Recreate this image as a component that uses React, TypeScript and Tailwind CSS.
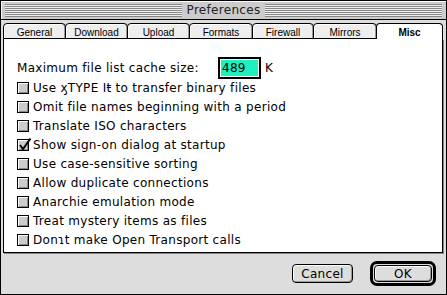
import React from "react";

function Stripes() {
  return (
    <div className="flex-1 h-[13px] flex flex-col gap-px bg-[#eeeeee]">
      {[0, 1, 2, 3, 4, 5, 6].map((i) => (
        <div key={i} className="h-px bg-[#888888]" />
      ))}
    </div>
  );
}

const tabs = [
  { label: "General", w: "w-[63px]" },
  { label: "Download", w: "w-[63px]" },
  { label: "Upload", w: "w-[63px]" },
  { label: "Formats", w: "w-[64px]" },
  { label: "Firewall", w: "w-[62px]" },
  { label: "Mirrors", w: "w-[64px]" },
  { label: "Misc", w: "w-[67px]", active: true },
];

const options: { label: string; checked?: boolean }[] = [
  { label: "Use ӽTYPE Iŧ to transfer binary files" },
  { label: "Omit file names beginning with a period" },
  { label: "Translate ISO characters" },
  { label: "Show sign-on dialog at startup", checked: true },
  { label: "Use case-sensitive sorting" },
  { label: "Allow duplicate connections" },
  { label: "Anarchie emulation mode" },
  { label: "Treat mystery items as files" },
  { label: "Donɿt make Open Transport calls" },
];

function Checkbox({ checked }: { checked?: boolean }) {
  return (
    <div className="relative w-[12px] h-[12px] shrink-0 border border-black bg-[#cccccc] shadow-[inset_1px_1px_0_#ffffff,inset_-1px_-1px_0_#888888]">
      {checked && (
        <svg
          className="absolute left-[0px] top-[-3px]"
          width="14"
          height="14"
          viewBox="0 0 14 14"
        >
          <path d="M2 8 L5 12 L12.5 1.5" stroke="#000" strokeWidth="2" fill="none" />
        </svg>
      )}
    </div>
  );
}

export default function App() {
  return (
    <div className="w-[447px] h-[295px] border border-black bg-[#dddddd] flex flex-col overflow-hidden text-black text-[12px] tracking-[0.3px] [font-family:'DejaVu_Sans',sans-serif]">
      {/* Title bar */}
      <div className="h-[19px] shrink-0 border-b border-black bg-[#cccccc] shadow-[inset_1px_1px_0_#ffffff] flex items-center px-[4px] gap-[5px]">
        <Stripes />
        <span className="leading-none text-[#222222]">Preferences</span>
        <Stripes />
      </div>

      {/* Body */}
      <div className="flex-1 flex flex-col pl-[2px] pr-[3px] pt-[3px]">
        {/* Tabs */}
        <div className="h-[16px] shrink-0 flex">
          {tabs.map((t, i) => (
            <div
              key={t.label}
              className={
                (t.active
                  ? "bg-white border-b-0 font-bold "
                  : "bg-[#eeeeee] border-b shadow-[inset_-1px_0_0_#999999,inset_1px_1px_0_#ffffff] ") +
                (i > 0 ? "-ml-px " : "") +
                t.w +
                " h-[16px] border-t border-x border-black rounded-t-[4px] flex justify-center pt-[4px] leading-none text-[10px] tracking-normal [font-family:'Liberation_Sans',Arial,sans-serif]"
              }
            >
              {t.label}
            </div>
          ))}
        </div>

        {/* Panel */}
        <div className="h-[214px] shrink-0 bg-white border-x border-b border-black shadow-[1px_1px_0_#888888] pt-[18px] pl-[13px] flex flex-col">
          <div className="h-[21px] flex items-center">
            <span className="w-[201px] shrink-0 leading-none">Maximum file list cache size:</span>
            <div className="w-[43px] h-[22px] self-start shrink-0 border-2 border-black bg-white p-px">
              <div className="h-full bg-[#1ef0c0] flex items-center pl-px leading-none">489</div>
            </div>
            <span className="ml-[4px] leading-none">K</span>
          </div>
          {options.map((o) => (
            <div key={o.label} className="h-[19px] flex items-center gap-[4px]">
              <Checkbox checked={o.checked} />
              <span className="leading-none whitespace-nowrap">{o.label}</span>
            </div>
          ))}
        </div>

        {/* Buttons */}
        <div className="flex-1 flex items-center justify-end gap-[17px] pr-[7px]">
          <div className="w-[61px] h-[19px] border border-black rounded-[4px] bg-[#dddddd] shadow-[inset_1px_1px_0_#ffffff,inset_-1px_-1px_0_#999999] flex items-center justify-center leading-none">
            Cancel
          </div>
          <div className="w-[66px] h-[25px] border-[3px] border-black rounded-[7px] p-px flex">
            <div className="flex-1 border border-black rounded-[4px] bg-[#dddddd] shadow-[inset_1px_1px_0_#ffffff,inset_-1px_-1px_0_#999999] flex items-center justify-center leading-none">
              OK
            </div>
          </div>
        </div>
      </div>
    </div>
  );
}
